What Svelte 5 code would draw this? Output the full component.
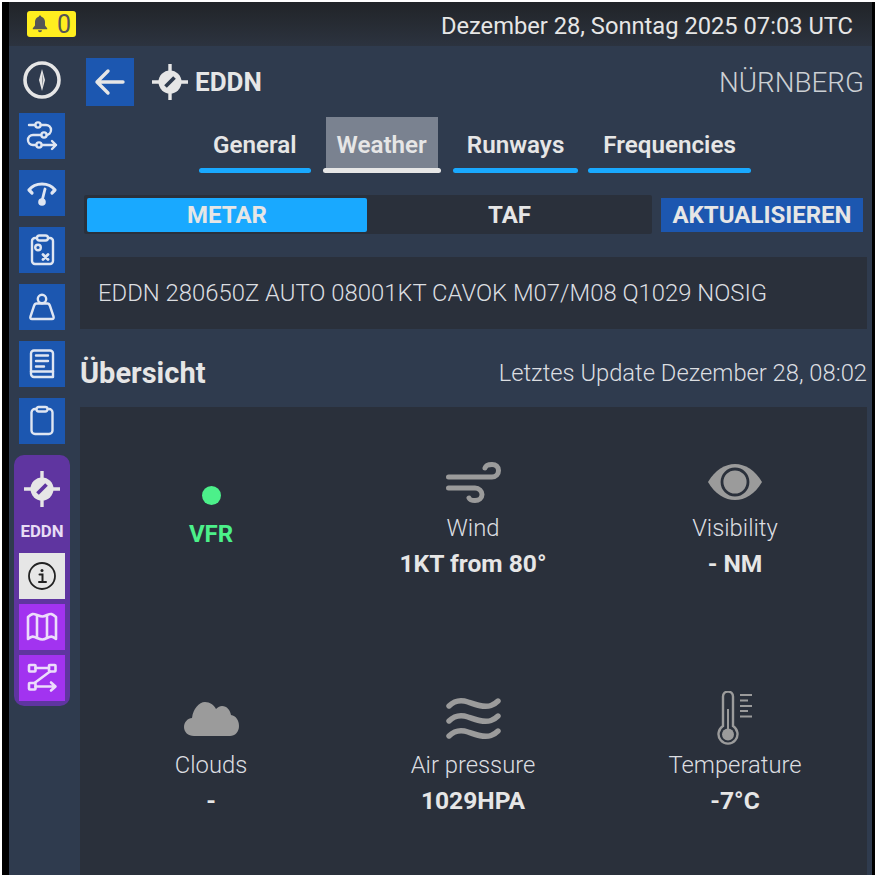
<script>
  const navIcons = ['route', 'gauge', 'plan', 'weight', 'book', 'clip'];
  const tabs = [
    { label: 'General', active: false },
    { label: 'Weather', active: true },
    { label: 'Runways', active: false },
    { label: 'Frequencies', active: false }
  ];
</script>

{#snippet airport(color)}
  <svg class="airport" viewBox="0 0 36 36" fill="none">
    <circle cx="18" cy="18" r="11.500" fill="#e6e6e6" />
    <path d="M18 0V7M18 29V36M0 18H7M29 18H36" stroke="#e6e6e6" stroke-width="3.400" />
    <path d="M13.500 22.500L22.500 13.500" stroke={color} stroke-width="3.800" />
  </svg>
{/snippet}

<div class="device">
  <header class="topbar">
    <div class="badge">
      <svg viewBox="0 0 16 18" class="bell"><path fill="#555" d="M8 0.5c.8 0 1.3.6 1.3 1.3C11.8 2.4 13 4.500 13 7v3.500l2.200 2.700v1H.8v-1L3 10.500V7c0-2.500 1.200-4.600 3.700-5.200C6.700 1.100 7.200.5 8 .5zM6 15.300h4c0 1.200-.9 2-2 2s-2-.8-2-2z"/></svg>
      <span>0</span>
    </div>
    <div class="date">Dezember 28, Sonntag 2025 07:03 UTC</div>
  </header>

  <div class="body">
    <aside class="side">
      <svg class="compass" viewBox="0 0 38 38" fill="none">
        <circle cx="19" cy="19" r="17" stroke="#e6e6e6" stroke-width="3.600" />
        <path d="M19 8L22 19L19 30L16 19Z" fill="#e6e6e6" />
        <path d="M19 12L20.300 19L19 26Z" fill="#8a8f96" />
      </svg>

      <div class="nav">
        {#each navIcons as name}
          <button class="nav-btn">
            <svg viewBox="0 0 46 46" fill="none" stroke="#dfe6f2" stroke-width="2.400" stroke-linecap="round" stroke-linejoin="round">
              {#if name === 'route'}
                <path d="M10 12H27a5 5 0 0 1 0 10H14a5 5 0 0 0 0 10H37M33 28l4 4-4 4" />
                <circle cx="19" cy="12" r="2.600" fill="#1c57b0" />
                <circle cx="25" cy="22" r="2.600" fill="#1c57b0" />
                <circle cx="20" cy="32" r="2.600" fill="#1c57b0" />
              {:else if name === 'gauge'}
                <path stroke-width="3.200" d="M10 20C16 12 30 12 36 20L33 23M10 20L13 23" />
                <path stroke-width="2.800" d="M23 31L26 19" />
                <circle cx="23" cy="32" r="3.800" fill="#dfe6f2" stroke="none" />
              {:else if name === 'plan'}
                <rect x="13" y="11" width="21" height="26" rx="3" />
                <rect x="18" y="8.500" width="11" height="5" rx="2.500" fill="#1c57b0" />
                <circle cx="19" cy="20.500" r="2.800" />
                <path stroke-width="2.800" d="M24 27.500l5 5M29 27.500l-5 5" />
              {:else if name === 'weight'}
                <circle cx="23" cy="15" r="4.200" />
                <path d="M17.500 19.500H28.500C30 19.500 30.500 20.500 31 22L34.500 32.500C35 34 34.500 35 33 35H13C11.500 35 11 34 11.500 32.500L15 22C15.500 20.500 16 19.500 17.500 19.500Z" />
              {:else if name === 'book'}
                <path d="M15 9.500H31a3 3 0 0 1 3 3V36H15a3 3 0 0 1-3-3V12.500a3 3 0 0 1 3-3Z" />
                <path d="M12 30.500H34M17 14.500H29M17 20H29M17 25.500H25" />
              {:else}
                <rect x="12.500" y="11" width="21" height="25" rx="3.500" />
                <rect x="17.500" y="9" width="11" height="4.500" rx="2.200" fill="#1c57b0" />
              {/if}
            </svg>
          </button>
        {/each}
      </div>

      <div class="panel">
        {@render airport('#5f35a0')}
        <div class="panel-code">EDDN</div>
        <div class="panel-btns">
          <button class="p-btn light">
            <svg viewBox="0 0 46 46" fill="none" stroke="#222" stroke-linecap="round">
              <circle cx="23" cy="23" r="13" stroke-width="1.800" />
              <circle cx="23" cy="17.500" r="1.500" fill="#222" stroke="none" />
              <path stroke-width="2" d="M20.500 21.500H23.500V28.500M20 29H27" />
            </svg>
          </button>
          <button class="p-btn">
            <svg viewBox="0 0 46 46" fill="none" stroke="#ecdcfb" stroke-width="2.600" stroke-linejoin="round">
              <path d="M9 13C13 9.500 14 9.500 18 11C23 13 24 13 28 11C32 9.500 33 9.500 37 13V35C33 32 32 32 28 34C24 36 23 36 18 34C14 32 13 32 9 35Z" />
              <path d="M18 11V34M28 11V34" />
            </svg>
          </button>
          <button class="p-btn">
            <svg viewBox="0 0 46 46" fill="none" stroke="#ecdcfb" stroke-width="2.600" stroke-linecap="round" stroke-linejoin="round">
              <rect x="10" y="10" width="6.500" height="6.500" rx=".8" />
              <rect x="30" y="10" width="6.500" height="6.500" rx=".8" />
              <rect x="10" y="28" width="6.500" height="6.500" rx=".8" />
              <path d="M16.500 13H30M31 16.500L15.500 28M16.500 31.500H36M32 27.500l4.500 4-4.500 4" />
            </svg>
          </button>
        </div>
      </div>
    </aside>

    <main class="main">
      <div class="head">
        <button class="back" aria-label="Back">
          <svg viewBox="0 0 48 48" fill="none" stroke="#e6e6e6" stroke-width="3.400" stroke-linecap="round" stroke-linejoin="round">
            <path d="M11 24H37M22 13L11 24L22 35" />
          </svg>
        </button>
        {@render airport('#2f3b4e')}
        <div class="code">EDDN</div>
        <div class="city">NÜRNBERG</div>
      </div>

      <nav class="tabs">
        {#each tabs as tab}
          <div class="tab" class:active={tab.active}>
            <div class="tab-label">{tab.label}</div>
            <div class="tab-line"></div>
          </div>
        {/each}
      </nav>

      <div class="toolbar">
        <div class="seg">
          <div class="seg-on">METAR</div>
          <div class="seg-off">TAF</div>
        </div>
        <button class="update">AKTUALISIEREN</button>
      </div>

      <div class="metar">EDDN 280650Z AUTO 08001KT CAVOK M07/M08 Q1029 NOSIG</div>

      <div class="over">
        <h2>Übersicht</h2>
        <div class="stamp">Letztes Update Dezember 28, 08:02</div>
      </div>

      <section class="grid">
        <div class="cell">
          <div class="ico vfr-ico"><span class="dot"></span></div>
          <div class="vfr">VFR</div>
        </div>
        <div class="cell">
          <div class="ico">
            <svg width="55" height="41" viewBox="0 0 55 41" fill="none" stroke="#9b9b9b" stroke-width="5" stroke-linecap="round">
              <path d="M2.500 15H46C50 15 52.500 12 52.500 8.500S50 2.500 46 2.500 40 3 39 6" />
              <path d="M2.500 26H29C33 26 36 29 36 32.500S33 38.500 29 38.500 24 38 23 36" />
            </svg>
          </div>
          <div class="label">Wind</div>
          <div class="value">1KT from 80°</div>
        </div>
        <div class="cell">
          <div class="ico">
            <svg width="54" height="36" viewBox="0 0 54 36" fill="none">
              <path d="M0 18C7 6 17 0 27 0S47 6 54 18C47 30 37 36 27 36S7 30 0 18Z" fill="#9b9b9b" />
              <circle cx="27" cy="18" r="13" fill="#9b9b9b" stroke="#2a303b" stroke-width="2.800" />
            </svg>
          </div>
          <div class="label">Visibility</div>
          <div class="value">- NM</div>
        </div>

        <div class="cell">
          <div class="ico">
            <svg width="55" height="34" viewBox="0 0 55 34">
              <path fill="#9b9b9b" d="M10 34C4 34 0 30 0 25C0 20 4 16 8 16C9 7 15 0 21 0C26 0 30 3 32 7C34 5 36 4 38 4C43 4 46 8 47 13C52 14 55 18 55 24C55 30 51 34 46 34Z" />
            </svg>
          </div>
          <div class="label">Clouds</div>
          <div class="value">-</div>
        </div>
        <div class="cell">
          <div class="ico">
            <svg width="55" height="44" viewBox="0 0 55 44" fill="none" stroke="#9b9b9b" stroke-width="5.400" stroke-linecap="round">
              <path d="M3 9C9 3 15 2.500 22 5S38 11 45 8.500C48 7.500 50 6 52 4" />
              <path d="M3 24C9 18 15 17.500 22 20S38 26 45 23.500C48 22.500 50 21 52 19" />
              <path d="M3 39C9 33 15 32.500 22 35S38 41 45 38.500C48 37.500 50 36 52 34" />
            </svg>
          </div>
          <div class="label">Air pressure</div>
          <div class="value">1029HPA</div>
        </div>
        <div class="cell">
          <div class="ico">
            <svg width="36" height="56" viewBox="0 0 36 56" fill="none" stroke="#9b9b9b">
              <path stroke-width="2.400" d="M6 35V5.500a5 5 0 0 1 10 0V35a9.500 9.500 0 1 1-10 0Z" />
              <path stroke-width="2" d="M11 18V42" />
              <circle cx="11" cy="43.500" r="6" fill="#9b9b9b" stroke="none" />
              <path stroke-width="2" d="M23 4H35M23 9.500H31M23 15H35M23 20H31M23 25.500H35" />
            </svg>
          </div>
          <div class="label">Temperature</div>
          <div class="value">-7°C</div>
        </div>
      </section>
    </main>
  </div>
</div>

<style>
  :global(body) {
    margin: 0;
    background: #fff;
    font-family: Roboto, "Liberation Sans", sans-serif;
  }
  button {
    border: 0;
    padding: 0;
    font-family: inherit;
    display: block;
  }
  svg {
    display: block;
  }
  .device {
    box-sizing: border-box;
    width: 873px;
    height: 873px;
    margin: 2px;
    border-left: 7px solid #000;
    border-right: 3px solid #000;
    display: flex;
    flex-direction: column;
    background: #2f3b4e;
    color: #e6e6e6;
    overflow: hidden;
  }
  .topbar {
    flex: none;
    height: 44px;
    display: flex;
    align-items: center;
    justify-content: space-between;
    padding: 0 19px 0 18px;
    background: linear-gradient(#212428, #2c333f);
  }
  .badge {
    width: 49px;
    height: 26px;
    box-sizing: border-box;
    padding-left: 5px;
    display: flex;
    align-items: center;
    gap: 9px;
    background: #ffee1f;
    border-radius: 3px;
    color: #555;
    font-size: 25px;
  }
  .bell {
    width: 16px;
    height: 18px;
  }
  .date {
    padding-top: 4px;
    font-size: 23.700px;
    font-weight: 400;
  }
  .body {
    flex: 1;
    min-height: 0;
    display: flex;
  }
  .side {
    flex: none;
    width: 71px;
    box-sizing: border-box;
    padding: 15px 5px 0 0;
    display: flex;
    flex-direction: column;
    align-items: center;
  }
  .compass {
    width: 38px;
    height: 38px;
  }
  .nav {
    margin-top: 14px;
    display: flex;
    flex-direction: column;
    gap: 11px;
  }
  .nav-btn {
    width: 46px;
    height: 46px;
    background: #1c57b0;
  }
  .panel {
    margin-top: 11px;
    width: 56px;
    box-sizing: border-box;
    padding: 16px 5px 5px;
    background: #5f35a0;
    border-radius: 10px;
    display: flex;
    flex-direction: column;
    align-items: center;
  }
  .airport {
    width: 36px;
    height: 36px;
    flex: none;
  }
  .panel-code {
    margin-top: 14px;
    height: 20px;
    line-height: 20px;
    font-size: 16.800px;
    font-weight: 700;
    color: #e8dcf5;
  }
  .panel-btns {
    margin-top: 12px;
    display: flex;
    flex-direction: column;
    gap: 5px;
  }
  .p-btn {
    width: 46px;
    height: 46px;
    background: #a233f0;
  }
  .p-btn.light {
    background: #e6e6e6;
  }
  .main {
    flex: 1;
    min-width: 0;
    padding-right: 5px;
    display: flex;
    flex-direction: column;
  }
  .head {
    margin-top: 12px;
    height: 48px;
    padding: 0 3px 0 6px;
    display: flex;
    align-items: center;
  }
  .back {
    width: 48px;
    height: 48px;
    background: #1c57b0;
    margin-right: 18px;
  }
  .code {
    margin-left: 7px;
    font-size: 26px;
    font-weight: 700;
  }
  .city {
    margin-left: auto;
    font-size: 27.800px;
    font-weight: 300;
    color: #ccd0d4;
  }
  .tabs {
    margin-top: 11px;
    padding-left: 119px;
    display: flex;
    gap: 12px;
  }
  .tab:last-child {
    margin-left: -2px;
  }
  .tab:last-child .tab-label {
    padding: 5px 12px 0;
  }
  .tab-label {
    height: 51px;
    margin: 0 3px;
    padding: 5px 11px 0;
    box-sizing: border-box;
    display: flex;
    align-items: center;
    font-size: 24.200px;
    font-weight: 600;
  }
  .tab-line {
    height: 5px;
    border-radius: 3px;
    background: #19a9ff;
  }
  .active .tab-label {
    background: #7a8290;
  }
  .active .tab-line {
    background: #e6e6e6;
  }
  .toolbar {
    margin-top: 22px;
    padding-left: 4px;
    display: flex;
    align-items: center;
    gap: 9px;
  }
  .seg {
    width: 568px;
    height: 39px;
    box-sizing: border-box;
    padding: 3px;
    display: flex;
    background: #2a303b;
    border-radius: 2px;
    font-size: 24px;
    font-weight: 700;
    text-align: center;
    line-height: 34px;
  }
  .seg-on {
    width: 280px;
    height: 34px;
    background: #19a9ff;
    border-radius: 2px;
  }
  .seg-off {
    flex: 1;
    padding-left: 3px;
  }
  .update {
    width: 202px;
    height: 34px;
    background: #1c57b0;
    color: #e6e6e6;
    font-size: 24px;
    font-weight: 700;
    white-space: nowrap;
  }
  .metar {
    margin-top: 23px;
    height: 72px;
    padding-left: 18px;
    display: flex;
    align-items: center;
    background: #2a303b;
    font-size: 23.850px;
    font-weight: 300;
    color: #dcdee1;
  }
  .over {
    flex: none;
    height: 78px;
    box-sizing: border-box;
    padding-top: 10px;
    display: flex;
    align-items: center;
    justify-content: space-between;
  }
  h2 {
    margin: 0;
    font-size: 29px;
    font-weight: 700;
  }
  .stamp {
    font-size: 23.750px;
    font-weight: 300;
    color: #dcdee1;
  }
  .grid {
    flex: 1;
    min-height: 0;
    background: #2a303b;
    display: grid;
    grid-template-columns: repeat(3, 262px);
    grid-auto-rows: 237px;
    align-content: start;
    padding-top: 45px;
  }
  .cell {
    display: flex;
    flex-direction: column;
    align-items: center;
    text-align: center;
  }
  .ico {
    height: 60px;
    display: flex;
    align-items: center;
    justify-content: center;
  }
  .vfr-ico {
    height: 66px;
    align-items: flex-end;
  }
  .dot {
    width: 19px;
    height: 19px;
    border-radius: 50%;
    background: #4cf08a;
    margin-bottom: 13px;
  }
  .vfr {
    height: 32px;
    line-height: 32px;
    font-size: 24px;
    font-weight: 700;
    color: #4cf08a;
  }
  .label {
    height: 32px;
    line-height: 32px;
    font-size: 23.800px;
    font-weight: 300;
    color: #dcdee1;
  }
  .value {
    margin-top: 4px;
    height: 32px;
    line-height: 32px;
    font-size: 24.600px;
    font-weight: 700;
  }
</style>
